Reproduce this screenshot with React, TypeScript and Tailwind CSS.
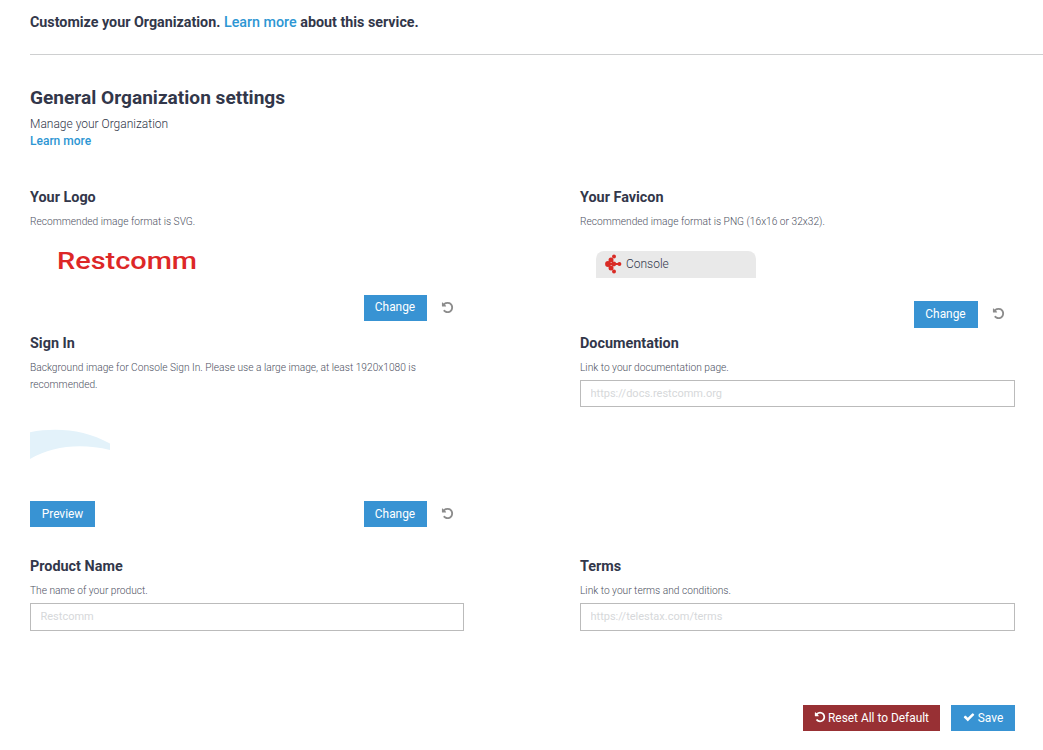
import type { ReactNode } from "react";

function UndoIcon({ className }: { className: string }) {
  return (
    <svg viewBox="0 0 1792 1792" className={className} fill="currentColor" aria-hidden="true">
      <path d="M1664 896q0 156-61 298t-164 245-245 164-298 61q-172 0-327-72.5t-264-204.5q-7-10-6.5-22.5t8.5-20.5l137-138q10-9 25-9 16 2 23 12 73 95 179 147t225 52q104 0 198.5-40.5t163.5-109.5 109.5-163.5 40.5-198.5-40.5-198.5-109.5-163.5-163.5-109.5-198.5-40.5q-98 0-188 35.5t-160 101.5l137 138q31 30 14 69-17 40-59 40h-448q-26 0-45-19t-19-45v-448q0-42 40-59 39-17 69 14l130 129q107-101 244.5-156.5t284.5-55.5q156 0 298 61t245 164 164 245 61 298z" />
    </svg>
  );
}

function CheckIcon({ className }: { className: string }) {
  return (
    <svg viewBox="0 0 1792 1792" className={className} fill="currentColor" aria-hidden="true">
      <path d="M1671 566q0 40-28 68l-724 724-136 136q-28 28-68 28t-68-28l-136-136-362-362q-28-28-28-68t28-68l136-136q28-28 68-28t68 28l294 295 656-657q28-28 68-28t68 28l136 136q28 28 28 68z" />
    </svg>
  );
}

function Button({ className, children }: { className: string; children: ReactNode }) {
  return (
    <button
      type="button"
      className={`flex shrink-0 items-center justify-center text-[11.9px] whitespace-nowrap text-white ${className}`}
    >
      {children}
    </button>
  );
}

function ChangeControls({ className, buttonClass }: { className: string; buttonClass: string }) {
  return (
    <div className={`flex items-center ${className}`}>
      <Button className={`bg-[#3893d3] pr-px ${buttonClass}`}>Change</Button>
      <button type="button" aria-label="Reset" className="ml-[13.5px] pb-[2px] text-[#8c8c8c]">
        <UndoIcon className="size-[13px]" />
      </button>
    </div>
  );
}

function Section({ title, hint, children }: { title: string; hint: string; children?: ReactNode }) {
  return (
    <section className="flex flex-col">
      <h3 className="pt-px text-[14.4px] leading-5 font-bold text-[#32374a]">{title}</h3>
      <p className="mt-[5px] max-w-[400px] text-[10.2px] leading-[17px] font-light text-[#4d5162]">{hint}</p>
      {children}
    </section>
  );
}

function TextField({ placeholder, className }: { placeholder: string; className: string }) {
  return (
    <input
      type="text"
      placeholder={placeholder}
      className={`mt-[4px] w-full border border-[#bbbbbb] px-[9.5px] pb-px text-[11px] placeholder:text-[#d6d8da] ${className}`}
    />
  );
}

function RestcommLogo() {
  return (
    <svg className="mt-[14px] ml-[24px] h-[34px] w-[150px]" viewBox="0 0 150 34">
      <text
        x="3"
        y="24.5"
        textLength="140"
        lengthAdjust="spacingAndGlyphs"
        className="fill-[#dd2727] font-['Roboto',sans-serif] text-[24.5px] font-medium"
      >
        Restcomm
      </text>
    </svg>
  );
}

function Favicon() {
  return (
    <svg className="h-[20px] w-[17px]" viewBox="0 0 17 20" fill="#d92b25" aria-hidden="true">
      <circle cx="9" cy="2.4" r="2" />
      <circle cx="6" cy="5.9" r="2.5" />
      <circle cx="3" cy="10" r="2.9" />
      <circle cx="6" cy="14" r="2.5" />
      <circle cx="9" cy="17.5" r="2" />
      <circle cx="8.8" cy="10" r="2.4" />
      <circle cx="14.4" cy="10" r="2" />
      <path d="M3 9h11.5v2H3z" />
    </svg>
  );
}

export default function App() {
  return (
    <main className="h-[750px] overflow-hidden bg-white pl-[30px] font-['Roboto',sans-serif] text-[#32374a]">
      <header className="h-[55px] border-b border-[#cecfd0] pt-[12px] text-[14.3px] leading-5 font-bold">
        Customize your Organization.{" "}
        <a href="#" className="font-medium text-[#2d96d3]">Learn more</a> about this service.
      </header>

      <div className="h-[132px] pt-[31px]">
        <h2 className="text-[19.1px] leading-6 font-bold">General Organization settings</h2>
        <p className="mt-[6px] text-[12px] leading-[17px] font-light">Manage your Organization</p>
        <a href="#" className="block text-[12px] leading-[17px] font-medium text-[#2d96d3]">Learn more</a>
      </div>

      <div className="grid grid-cols-[434px_435px] grid-rows-[146px_223px_149px] gap-x-[116px]">
        <Section title="Your Logo" hint="Recommended image format is SVG.">
          <RestcommLogo />
          <ChangeControls className="mt-[17px] ml-[334px]" buttonClass="h-[26px] w-[63px]" />
        </Section>
        <Section title="Your Favicon" hint="Recommended image format is PNG (16x16 or 32x32).">
          <div className="mt-[21px] ml-[16px] flex h-[27px] w-[160px] items-center rounded-t-[8px] bg-[#e9e9e9] pb-px pl-[9px]">
            <Favicon />
            <span className="ml-[4px] text-[12px] font-light">Console</span>
          </div>
          <ChangeControls className="mt-[23px] ml-[334px]" buttonClass="h-[27px] w-[64px]" />
        </Section>

        <Section
          title="Sign In"
          hint="Background image for Console Sign In. Please use a large image, at least 1920x1080 is recommended."
        >
          <svg className="mt-[36px] h-[32px] w-[80px]" viewBox="0 0 80 32" fill="#e3f2fa" aria-hidden="true">
            <path d="M0 3.2C28-2 55 1 80 14.5V21C51 14 22 17 0 30Z" />
          </svg>
          <div className="mt-[40px] flex">
            <Button className="h-[26px] w-[65px] bg-[#3893d3] pt-[2px]">Preview</Button>
            <ChangeControls className="ml-[269px]" buttonClass="h-[26px] w-[63px] pt-[2px]" />
          </div>
        </Section>
        <Section title="Documentation" hint="Link to your documentation page.">
          <TextField placeholder="https://docs.restcomm.org" className="h-[27px]" />
        </Section>

        <Section title="Product Name" hint="The name of your product.">
          <TextField placeholder="Restcomm" className="h-[28px]" />
        </Section>
        <Section title="Terms" hint="Link to your terms and conditions.">
          <TextField placeholder="https://telestax.com/terms" className="h-[28px]" />
        </Section>
      </div>

      <footer className="flex justify-end gap-[11px] pr-[28px]">
        <Button className="h-[26px] w-[137px] bg-[#983034] pt-px">
          <UndoIcon className="mr-[2px] mb-[3px] size-[12px]" />
          Reset All to Default
        </Button>
        <Button className="h-[26px] w-[64px] bg-[#3893d3] pt-px">
          <CheckIcon className="mr-[3px] mb-[3px] size-[12px]" />
          Save
        </Button>
      </footer>
    </main>
  );
}
